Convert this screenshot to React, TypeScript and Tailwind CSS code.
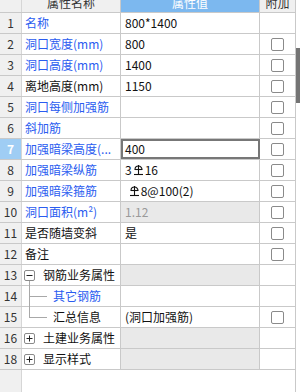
import React from 'react'

type Row = {
  n: number
  name: string
  blue?: boolean
  value?: React.ReactNode
  cb?: boolean
  grayVal?: boolean
  selected?: boolean
  group?: 'minus' | 'plus'
  child?: 'mid' | 'last'
}

function Steel() {
  return (
    <svg width="11" height="12" viewBox="0 0 11 12" className="inline-block align-[-1px] mx-[1px]">
      <path d="M2 5.5 A3.5 3.5 0 0 1 9 5.5 Z" fill="none" stroke="#111" strokeWidth="1.1" />
      <line x1="5.5" y1="1" x2="5.5" y2="10" stroke="#111" strokeWidth="1.1" />
      <line x1="1" y1="10.5" x2="10" y2="10.5" stroke="#111" strokeWidth="1.1" />
      <line x1="2" y1="5.5" x2="9" y2="5.5" stroke="#111" strokeWidth="1.1" />
    </svg>
  )
}

const rows: Row[] = [
  { n: 1, name: '名称', blue: true, value: '800*1400' },
  { n: 2, name: '洞口宽度(mm)', blue: true, value: '800', cb: true },
  { n: 3, name: '洞口高度(mm)', blue: true, value: '1400', cb: true },
  { n: 4, name: '离地高度(mm)', value: '1150', cb: true },
  { n: 5, name: '洞口每侧加强筋', blue: true, value: '', cb: true },
  { n: 6, name: '斜加筋', blue: true, value: '', cb: true },
  { n: 7, name: '加强暗梁高度(...', blue: true, value: '400', cb: true, selected: true },
  { n: 8, name: '加强暗梁纵筋', blue: true, value: <>3<Steel />16</>, cb: true },
  { n: 9, name: '加强暗梁箍筋', blue: true, value: <>&nbsp;<Steel />8@100(2)</>, cb: true },
  { n: 10, name: '洞口面积(m²)', blue: true, value: '1.12', grayVal: true, cb: true },
  { n: 11, name: '是否随墙变斜', value: '是', cb: true },
  { n: 12, name: '备注', value: '', cb: true },
  { n: 13, name: '钢筋业务属性', group: 'minus', grayVal: true },
  { n: 14, name: '其它钢筋', blue: true, child: 'mid' },
  { n: 15, name: '汇总信息', value: '(洞口加强筋)', cb: true, child: 'last' },
  { n: 16, name: '土建业务属性', group: 'plus', grayVal: true },
  { n: 18, name: '显示样式', group: 'plus', grayVal: true },
]

function Box({ sign }: { sign: 'minus' | 'plus' }) {
  return (
    <span className="w-[11px] h-[11px] border border-[#8a8a8a] rounded-[2px] bg-white flex items-center justify-center shrink-0">
      <svg width="7" height="7" viewBox="0 0 7 7">
        <line x1="0.5" y1="3.5" x2="6.5" y2="3.5" stroke="#222" strokeWidth="1" />
        {sign === 'plus' && <line x1="3.5" y1="0.5" x2="3.5" y2="6.5" stroke="#222" strokeWidth="1" />}
      </svg>
    </span>
  )
}

function NameCell({ r }: { r: Row }) {
  const color = r.blue ? 'text-[#2a5cf0]' : 'text-[#111]'
  if (r.group) {
    return (
      <div className="w-[99px] h-full border-r border-[#c9c9c9] flex items-center pl-[2px] gap-[8px] relative">
        <Box sign={r.group} />
        <span className="text-[#111] whitespace-nowrap">{r.name}</span>
        {r.group === 'minus' && <span className="absolute left-[7px] top-[16px] bottom-[-1px] w-px bg-[#a8a8a8]" />}
      </div>
    )
  }
  if (r.child) {
    return (
      <div className="w-[99px] h-full border-r border-[#c9c9c9] flex items-center pl-[31px] relative">
        <span className={`absolute left-[7px] top-[-1px] w-px bg-[#a8a8a8] ${r.child === 'mid' ? 'bottom-[-1px]' : 'h-[11px]'}`} />
        <span className="absolute left-[7px] top-[10px] w-[18px] h-px bg-[#a8a8a8]" />
        <span className={`${color} whitespace-nowrap`}>{r.name}</span>
      </div>
    )
  }
  return (
    <div className="w-[99px] h-full border-r border-[#c9c9c9] flex items-center pl-[3px] overflow-hidden">
      <span className={`${color} whitespace-nowrap`}>{r.name}</span>
    </div>
  )
}

export default function App() {
  return (
    <div
      className="w-[300px] h-[392px] bg-white flex overflow-hidden text-[12px] leading-none"
      style={{ fontFamily: '"Noto Sans CJK SC", "Noto Sans", sans-serif' }}
    >
      <div className="w-[296px] flex flex-col border-r border-[#c9c9c9] relative">
        {/* header */}
        <div className="flex h-[13px] border-b border-[#c9c9c9] overflow-hidden shrink-0">
          <div className="w-[22px] bg-[#f0f0f0] border-r border-[#d6d6d6]" />
          <div className="w-[99px] bg-[#f0f0f0] border-r border-[#c9c9c9] flex justify-center">
            <span className="-mt-[7px] text-[#333] leading-[20px]">属性名称</span>
          </div>
          <div className="w-[139px] bg-[#7cb8ef] border-r border-[#c9c9c9] flex justify-center">
            <span className="-mt-[7px] text-white leading-[20px]">属性值</span>
          </div>
          <div className="flex-1 bg-[#f0f0f0] flex justify-center">
            <span className="-mt-[7px] text-[#333] leading-[20px]">附加</span>
          </div>
        </div>
        {rows.map(r => (
          <div key={r.n} className="flex h-[21px] border-b border-[#c9c9c9] shrink-0">
            <div
              className={`w-[22px] h-full border-r border-[#d6d6d6] flex items-center justify-center ${
                r.selected ? 'bg-[#9fcdf4] text-white font-bold' : 'bg-[#f0f0f0] text-[#333]'
              }`}
            >
              {r.n}
            </div>
            <NameCell r={r} />
            <div
              className={`w-[139px] h-full border-r border-[#c9c9c9] flex items-center whitespace-nowrap ${
                r.grayVal ? 'bg-[#e9e9e9]' : ''
              } ${r.n === 10 ? 'text-[#9a9a9a]' : 'text-[#111]'} ${
                r.selected ? 'outline-2 outline-[#777] -outline-offset-2 pl-[4px]' : 'pl-[4px]'
              }`}
            >
              {r.value}
            </div>
            <div className="flex-1 h-full flex items-center justify-center">
              {r.cb && <span className="w-[13px] h-[13px] border border-[#8a8a8a] rounded-[2px] bg-white" />}
            </div>
          </div>
        ))}
        <div className="flex-1 flex">
          <div className="w-[22px] bg-[#f0f0f0] border-r border-[#d6d6d6]" />
        </div>
      </div>
      <div className="w-[4px] flex flex-col">
        <div className="h-[48px]" />
        <div className="h-[55px] bg-[#747474]" />
      </div>
    </div>
  )
}
